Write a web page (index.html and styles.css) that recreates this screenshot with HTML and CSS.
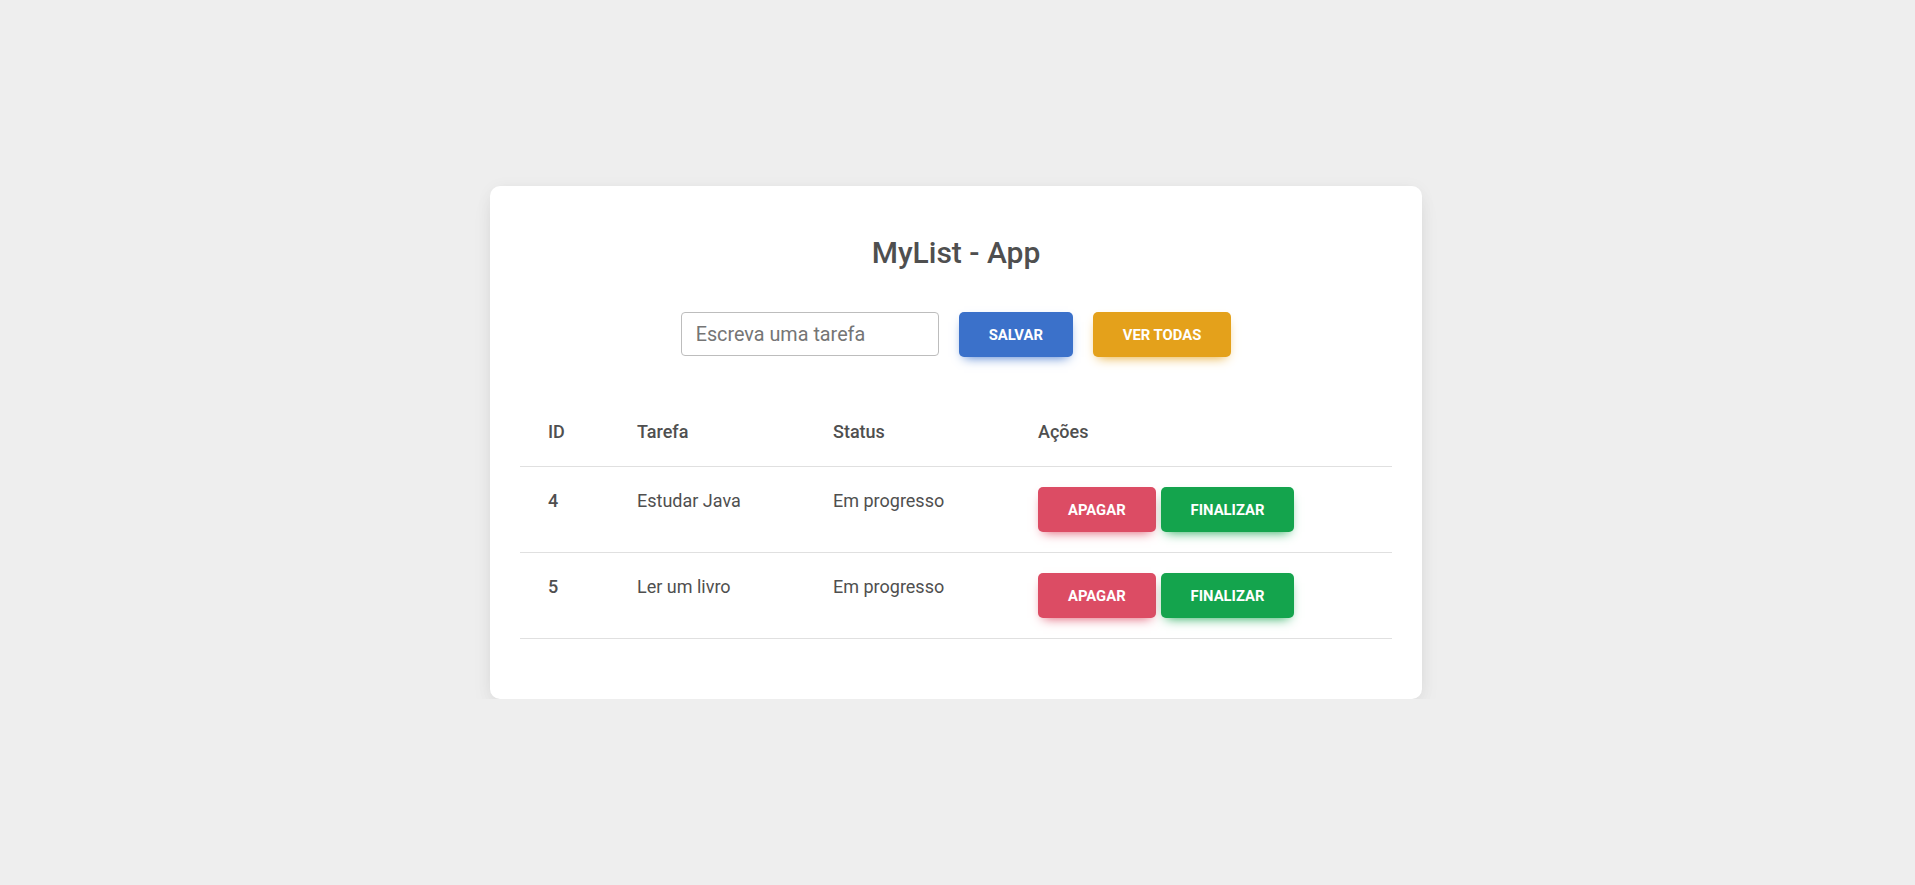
FILE: index.html
```html
<!DOCTYPE html>
<html lang="pt-BR">
<head>
<meta charset="utf-8">
<title>MyList - App</title>
<link rel="stylesheet" href="styles.css">
</head>
<body>
<div class="page">
  <div class="card">
    <h1 class="title">MyList - App</h1>
    <div class="form-row">
      <input class="task-input" type="text" placeholder="Escreva uma tarefa">
      <button class="btn btn-primary">Salvar</button>
      <button class="btn btn-warning">Ver todas</button>
    </div>
    <table class="tasks">
      <thead>
        <tr>
          <th class="col-id">ID</th>
          <th class="col-task">Tarefa</th>
          <th class="col-status">Status</th>
          <th class="col-actions">Ações</th>
        </tr>
      </thead>
      <tbody>
        <tr>
          <th class="row-id">4</th>
          <td>Estudar Java</td>
          <td>Em progresso</td>
          <td class="actions">
            <div class="action-group">
              <button class="btn btn-danger">Apagar</button>
              <button class="btn btn-success">Finalizar</button>
            </div>
          </td>
        </tr>
        <tr>
          <th class="row-id">5</th>
          <td>Ler um livro</td>
          <td>Em progresso</td>
          <td class="actions">
            <div class="action-group">
              <button class="btn btn-danger">Apagar</button>
              <button class="btn btn-success">Finalizar</button>
            </div>
          </td>
        </tr>
      </tbody>
    </table>
  </div>
</div>
</body>
</html>
```

FILE: styles.css
```css
html, body {
  margin: 0;
  padding: 0;
}

body {
  background: #eeeeee;
  font-family: Roboto, "Liberation Sans", Arial, sans-serif;
  color: #4f4f4f;
}

.page {
  display: flex;
  justify-content: center;
  padding: 186px 3px 0 0;
}

.card {
  width: 932px;
  box-sizing: border-box;
  background: #ffffff;
  border-radius: 10px;
  padding: 30px;
  box-shadow: 0 2px 18px -3px rgba(0, 0, 0, 0.08), 0 12px 24px -2px rgba(0, 0, 0, 0.05);
}

.title {
  margin: 19px 0 42px;
  text-align: center;
  font-size: 30px;
  line-height: 35px;
  font-weight: 500;
  color: #4f4f4f;
}

.form-row {
  display: flex;
  justify-content: center;
  align-items: flex-start;
  gap: 20px;
}

.task-input {
  width: 258px;
  height: 44px;
  box-sizing: border-box;
  border: 1px solid #bdbdbd;
  border-radius: 4px;
  padding: 0 14px;
  font-family: Roboto, "Liberation Sans", Arial, sans-serif;
  font-size: 19.8px;
  color: #4f4f4f;
  background: #fff;
  outline: none;
}

.task-input::placeholder {
  color: #757575;
}

.btn {
  height: 45px;
  box-sizing: border-box;
  border: 0;
  border-radius: 5px;
  padding: 0 30px;
  font-family: Roboto, "Liberation Sans", Arial, sans-serif;
  font-size: 14.8px;
  font-weight: 700;
  text-transform: uppercase;
  color: #ffffff;
  cursor: pointer;
}

.btn-primary {
  background: #3b71ca;
  box-shadow: 0 5px 11px -5px #3b71ca;
}

.btn-warning {
  background: #e4a11b;
  box-shadow: 0 5px 11px -5px #e4a11b;
}

.btn-danger {
  background: #dc4c64;
  box-shadow: 0 5px 11px -5px #dc4c64;
}

.btn-success {
  background: #14a44d;
  box-shadow: 0 5px 11px -5px #14a44d;
}

.tasks {
  width: 100%;
  margin: 41px 0 30px;
  border-collapse: collapse;
  font-size: 18px;
  line-height: 28px;
}

.tasks th,
.tasks td {
  text-align: left;
  vertical-align: top;
  padding: 20px 0 20px 28px;
  border-bottom: 1px solid #e0e0e0;
}

.tasks thead th {
  font-weight: 500;
}

.tasks td {
  font-weight: 400;
}

.tasks .row-id {
  font-weight: 500;
}

.col-id { width: 61px; }
.col-task { width: 168px; }
.col-status { width: 177px; }

.action-group {
  display: flex;
  gap: 5px;
}
```
